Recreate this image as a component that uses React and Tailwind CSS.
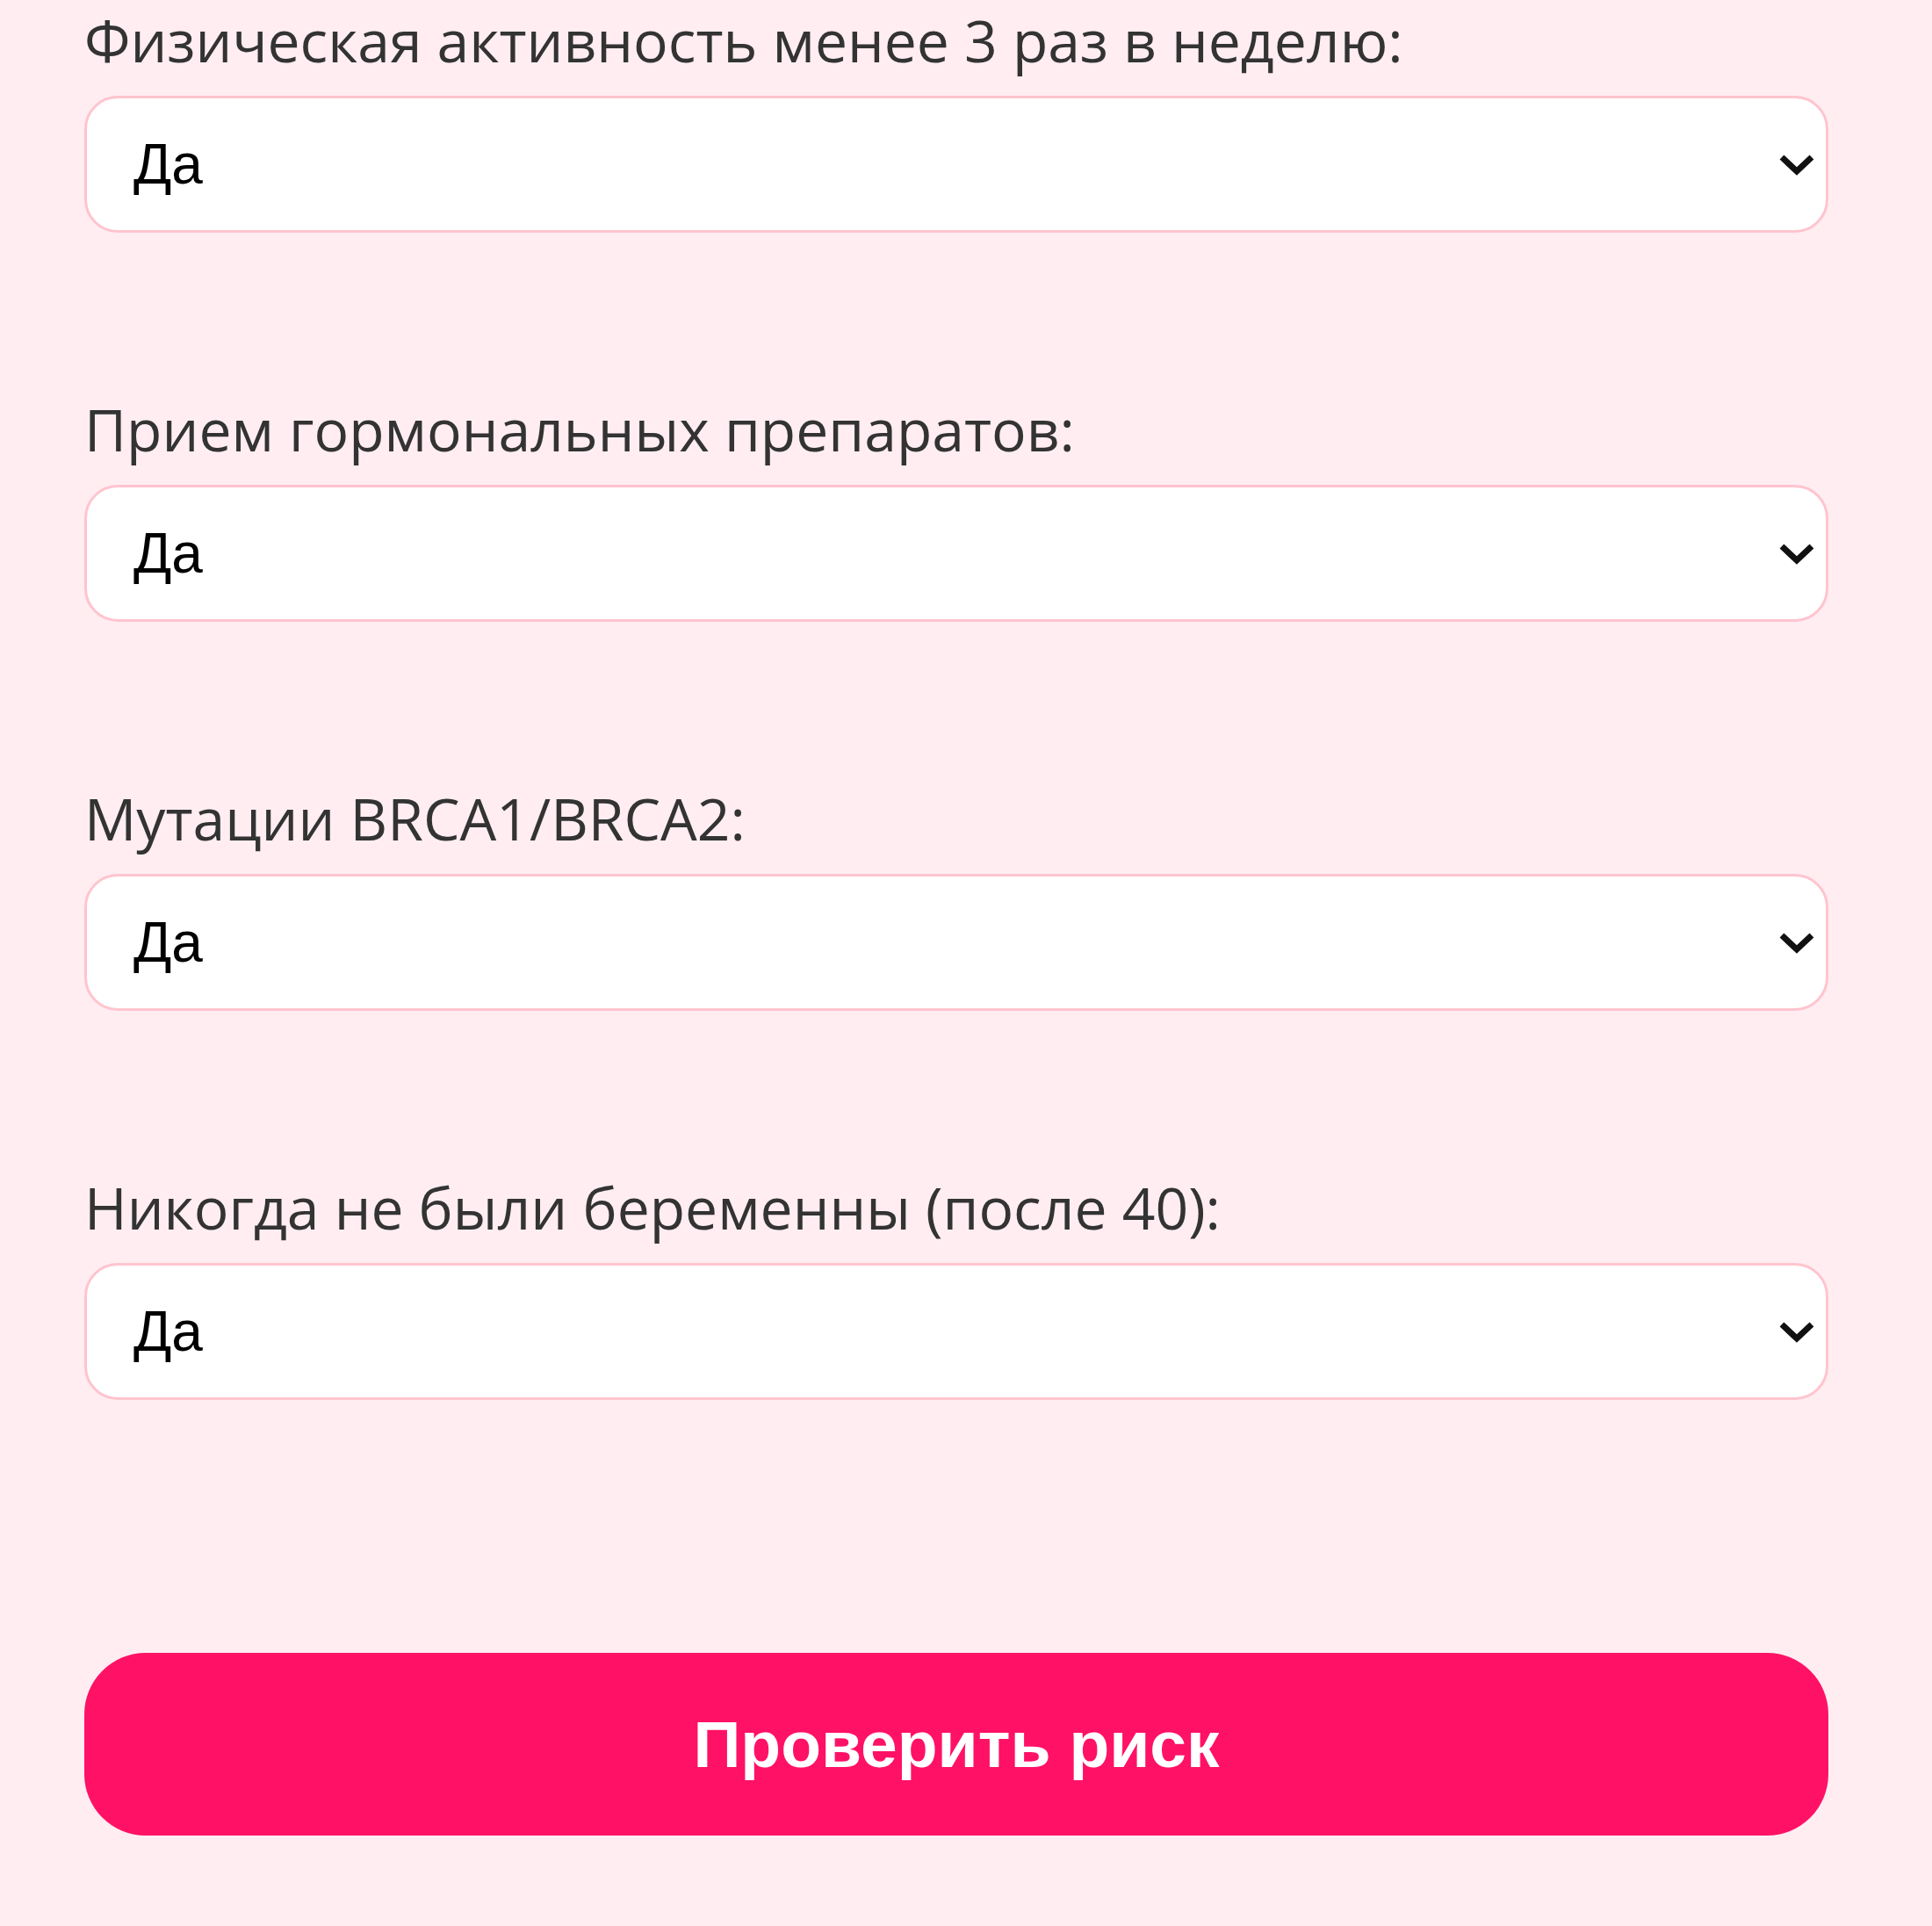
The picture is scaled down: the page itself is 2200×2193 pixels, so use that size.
import React from "react";

const fields = [
  "Физическая активность менее 3 раз в неделю:",
  "Прием гормональных препаратов:",
  "Мутации BRCA1/BRCA2:",
  "Никогда не были беременны (после 40):",
];

function Chevron() {
  return (
    <svg
      className="pointer-events-none absolute right-[16px] top-1/2 -translate-y-1/2"
      width="40"
      height="26"
      viewBox="0 0 40 26"
      fill="none"
    >
      <polyline
        points="3,5 20,21 37,5"
        stroke="#111"
        strokeWidth="7"
        strokeLinecap="butt"
        strokeLinejoin="miter"
      />
    </svg>
  );
}

export default function App() {
  return (
    <div className="min-h-[2193px] w-full bg-[#ffedf2] pl-[96px]">
      <div className="w-[1986px]">
        {fields.map((label) => (
          <div key={label} className="mb-[178px]">
            <label
              className="block text-[66px] leading-[90px] text-[#333333]"
              style={{ fontFamily: '"Open Sans", "Noto Sans", sans-serif' }}
            >
              {label}
            </label>
            <div className="relative mt-[19px]">
              <select
                defaultValue="Да"
                className="block h-[156px] w-full appearance-none rounded-[38px] border-[3px] border-[#ffc4ce] bg-white pl-[53px] text-[64px] text-black outline-none"
                style={{ fontFamily: '"Liberation Sans", Arial, sans-serif' }}
              >
                <option>Да</option>
                <option>Нет</option>
              </select>
              <Chevron />
            </div>
          </div>
        ))}
        <button
          className="mt-[288px] flex h-[208px] w-full items-center justify-center rounded-[70px] bg-[#ff1166] text-[75px] font-bold text-white"
          style={{ fontFamily: '"Liberation Sans", Arial, sans-serif' }}
        >
          Проверить риск
        </button>
      </div>
    </div>
  );
}
